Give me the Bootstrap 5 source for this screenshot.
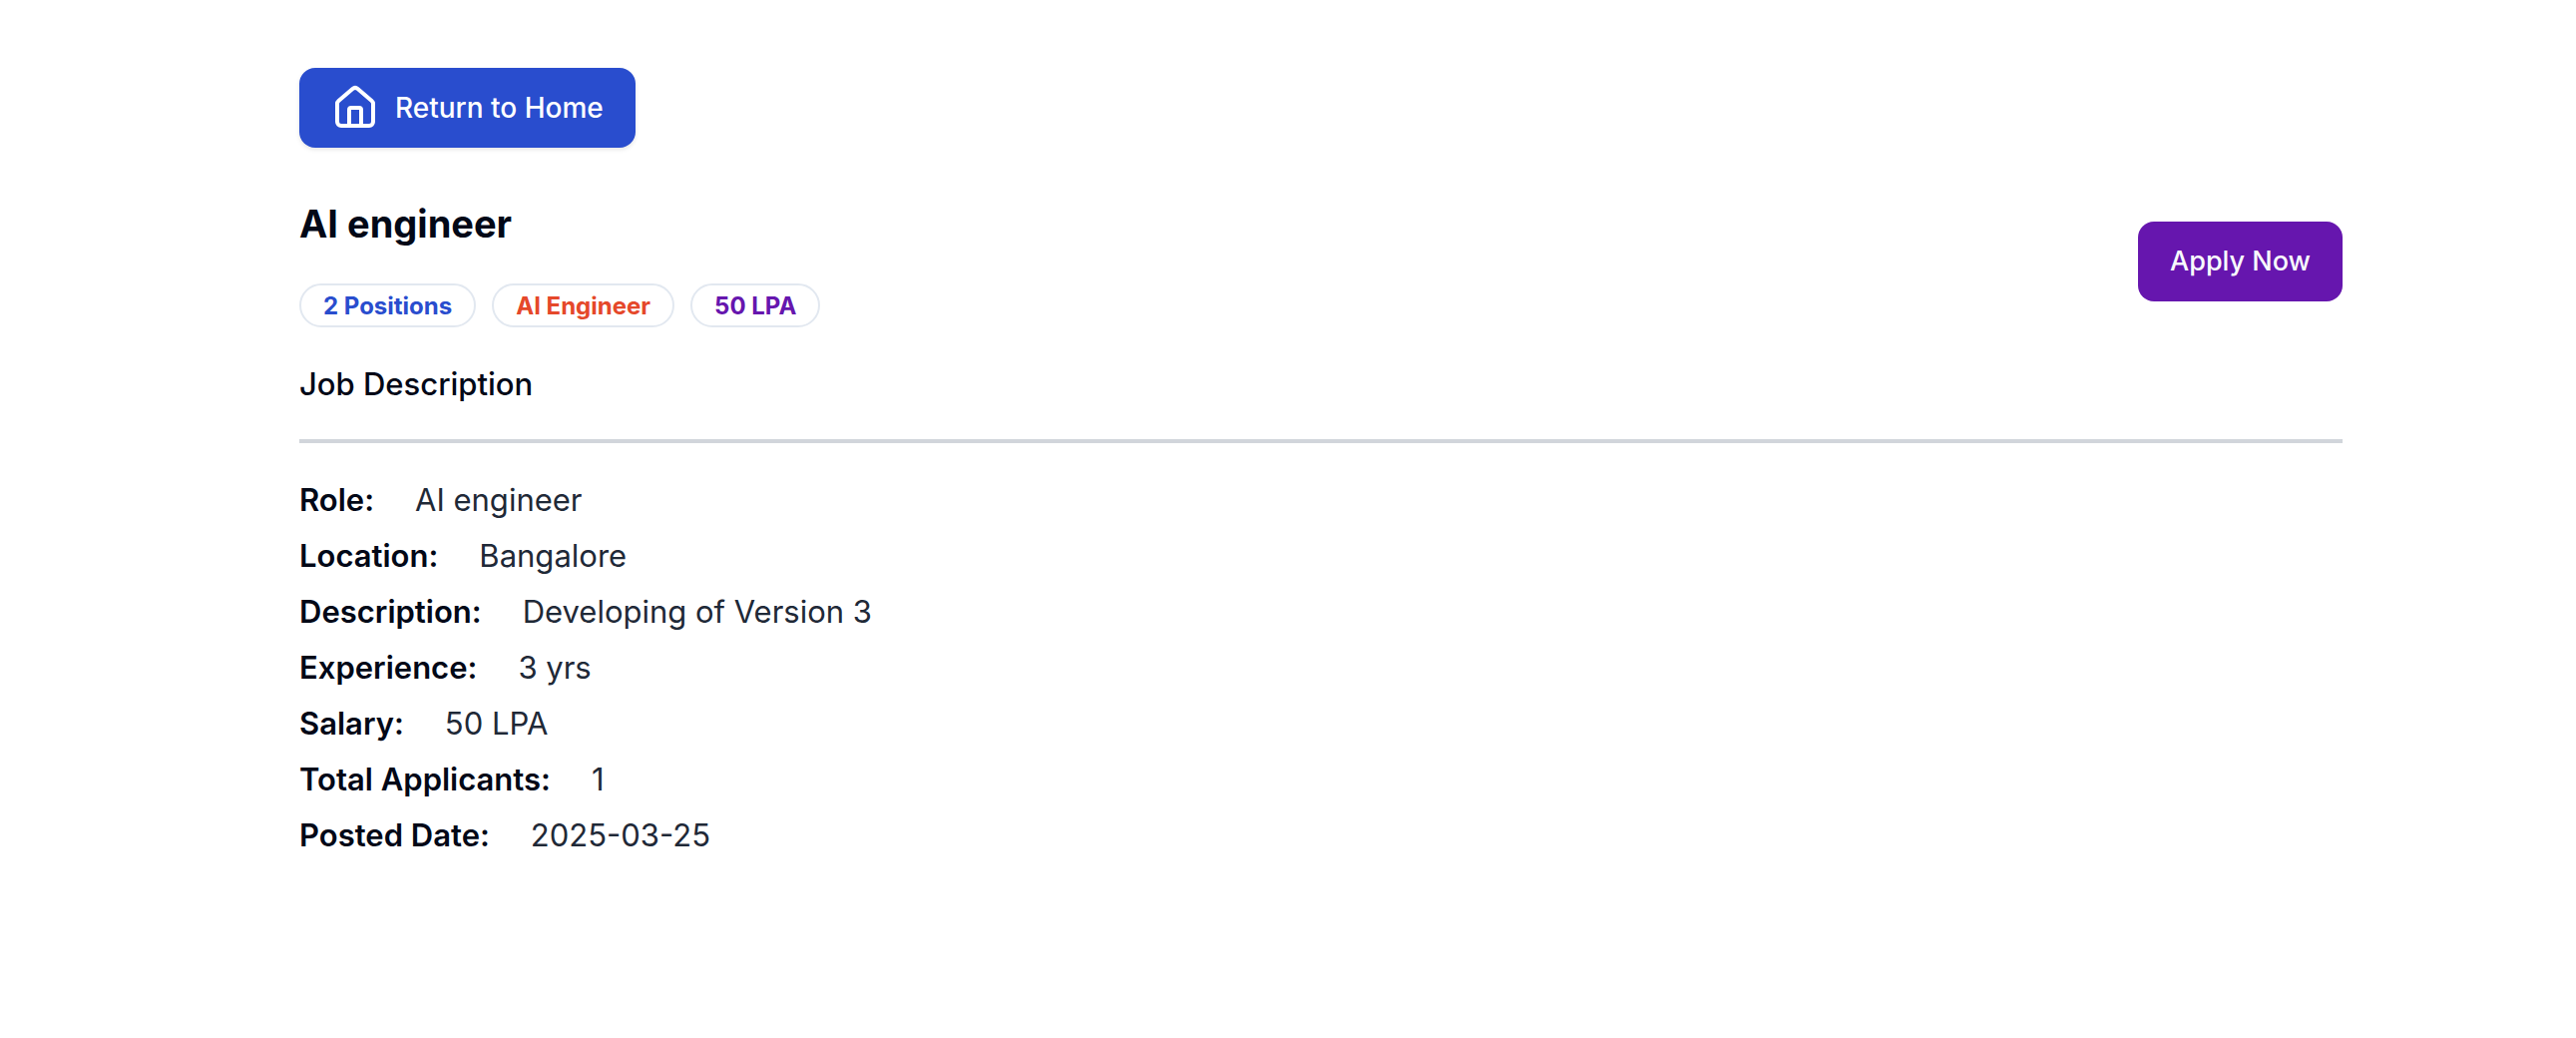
<!DOCTYPE html>
<html lang="en">
<head>
<meta charset="utf-8">
<meta name="viewport" content="width=device-width, initial-scale=1">
<title>AI engineer – Job Description</title>
<link href="https://cdn.jsdelivr.net/npm/bootstrap@5.3.0/dist/css/bootstrap.min.css" rel="stylesheet">
<style>
body{font-family:Inter,"Liberation Sans",sans-serif;color:#020817;background:#fff}
.job-page{padding:68px 234px 64px 300px}
.job-btn{--bs-btn-color:#fff;--bs-btn-hover-color:#fff;--bs-btn-padding-x:32px;--bs-btn-padding-y:16px;--bs-btn-border-width:0;--bs-btn-border-radius:16px;--bs-btn-font-size:28px;--bs-btn-line-height:48px;--bs-btn-font-weight:500}
.btn-home{--bs-btn-bg:#294dce;--bs-btn-hover-bg:#1e40af;box-shadow:0 2px 4px rgba(0,0,0,.1)}
.btn-apply{--bs-btn-color:#f8fafc;--bs-btn-bg:#6616ae;--bs-btn-hover-bg:#5b21b6;--bs-btn-font-size:27px}
.job-head{margin-top:48px}
.job-title{font-size:38px;line-height:56px;font-weight:700}
.tag-row{gap:16px;margin-top:32px}
.job-tag{border:2px solid #e2e8f0;font-size:24px;line-height:32px;font-weight:700;padding:5px 22px 3px}
.tag-blue{color:#294dce}.tag-red{color:#e5482a}.tag-purple{color:#6616ae}
.section-title{font-size:31px;line-height:48px;font-weight:500;margin-top:33px;padding-bottom:31px;border-bottom:4px solid #d1d5db}
.fact-list{margin-top:29px;font-size:31px;line-height:56px}
.fact-list dt{font-weight:600}
.fact-list dd{color:#1f2937}
.fact-row{gap:41px}
</style>
</head>
<body>
<main class="job-page">
  <a href="#" class="btn job-btn btn-home d-inline-flex align-items-center gap-3">
    <svg width="48" height="48" viewBox="0 0 24 24" fill="none" stroke="currentColor" stroke-width="2" stroke-linecap="round" stroke-linejoin="round" aria-hidden="true"><path d="M15 21v-8a1 1 0 0 0-1-1h-4a1 1 0 0 0-1 1v8"/><path d="M3 10a2 2 0 0 1 .709-1.528l7-5.999a2 2 0 0 1 2.582 0l7 5.999A2 2 0 0 1 21 10v9a2 2 0 0 1-2 2H5a2 2 0 0 1-2-2z"/></svg>
    <span>Return to Home</span>
  </a>
  <header class="job-head d-flex align-items-center justify-content-between">
    <div>
      <h1 class="job-title mb-0">AI engineer</h1>
      <div class="tag-row d-flex align-items-center">
        <span class="job-tag tag-blue rounded-pill">2 Positions</span>
        <span class="job-tag tag-red rounded-pill">AI Engineer</span>
        <span class="job-tag tag-purple rounded-pill">50 LPA</span>
      </div>
    </div>
    <button type="button" class="btn job-btn btn-apply">Apply Now</button>
  </header>
  <h2 class="section-title mb-0">Job Description</h2>
  <dl class="fact-list mb-0">
    <div class="fact-row d-flex"><dt>Role:</dt><dd class="mb-0">AI engineer</dd></div>
    <div class="fact-row d-flex"><dt>Location:</dt><dd class="mb-0">Bangalore</dd></div>
    <div class="fact-row d-flex"><dt>Description:</dt><dd class="mb-0">Developing of Version 3</dd></div>
    <div class="fact-row d-flex"><dt>Experience:</dt><dd class="mb-0">3 yrs</dd></div>
    <div class="fact-row d-flex"><dt>Salary:</dt><dd class="mb-0">50 LPA</dd></div>
    <div class="fact-row d-flex"><dt>Total Applicants:</dt><dd class="mb-0">1</dd></div>
    <div class="fact-row d-flex"><dt>Posted Date:</dt><dd class="mb-0">2025-03-25</dd></div>
  </dl>
</main>
<script src="https://cdn.jsdelivr.net/npm/bootstrap@5.3.0/dist/js/bootstrap.bundle.min.js"></script>
</body>
</html>
